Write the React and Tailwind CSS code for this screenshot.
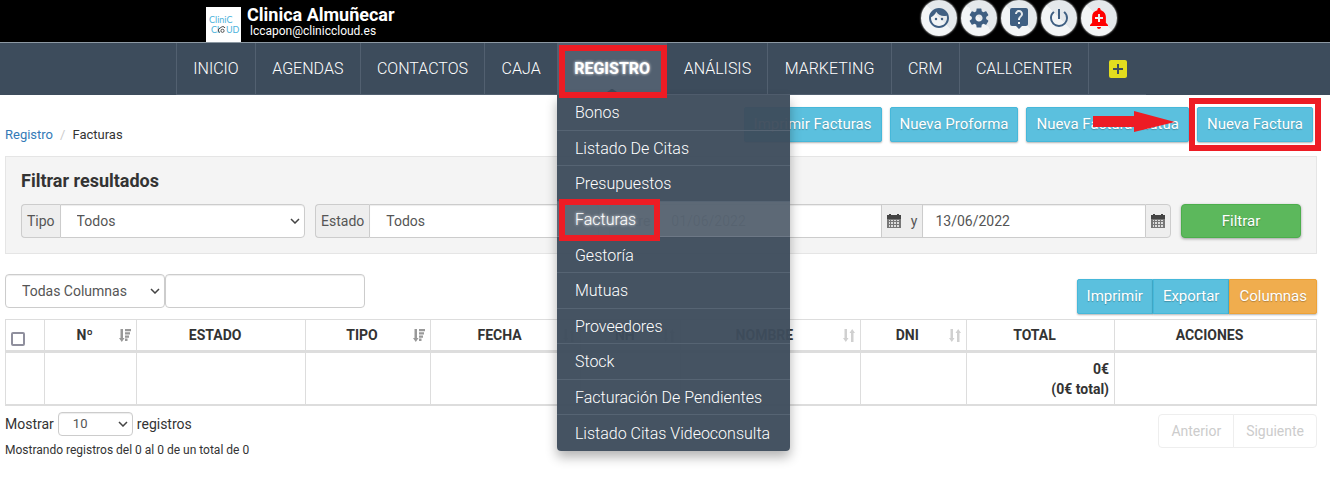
import React, { useState } from 'react';
import { MdFace, MdSettings, MdLiveHelp, MdPowerSettingsNew, MdAddAlert, MdAddBox } from 'react-icons/md';

const toolbar = [
  { label: 'Perfil', Icon: MdFace },
  { label: 'Ajustes', Icon: MdSettings },
  { label: 'Ayuda', Icon: MdLiveHelp },
  { label: 'Salir', Icon: MdPowerSettingsNew },
  { label: 'Avisos', Icon: MdAddAlert, alert: true }
];

const sections = ['INICIO', 'AGENDAS', 'CONTACTOS', 'CAJA', 'REGISTRO', 'ANÁLISIS', 'MARKETING', 'CRM', 'CALLCENTER'];

const registroMenu = [
  'Bonos',
  'Listado De Citas',
  'Presupuestos',
  'Facturas',
  'Gestoría',
  'Mutuas',
  'Proveedores',
  'Stock',
  'Facturación De Pendientes',
  'Listado Citas Videoconsulta'
];

const columns = [
  { name: 'Nº', width: 'w-[7%]', sort: 'desc' },
  { name: 'ESTADO', width: 'w-[12.9%]' },
  { name: 'TIPO', width: 'w-[9.5%]', sort: 'desc' },
  { name: 'FECHA', width: 'w-[11.5%]', sort: 'both' },
  { name: 'NH', width: 'w-[7.6%]', sort: 'both' },
  { name: 'NOMBRE', width: 'w-[13.7%]', sort: 'both' },
  { name: 'DNI', width: 'w-[8.1%]', sort: 'both' },
  { name: 'TOTAL', width: 'w-[11.3%]' },
  { name: 'ACCIONES', width: 'w-[15.4%]' }
];

const Logo = () => (
  <svg viewBox="0 0 35 35" className="h-[35px] w-[35px] bg-white" aria-hidden="true">
    <g fill="#4db3dc" fontFamily="Lato, sans-serif" fontSize="9">
      <text x="3" y="16">CliniC</text>
      <text x="5" y="26">Cl</text>
      <text x="20" y="26">UD</text>
    </g>
    <path d="M14 25.500a2.300 2.300 0 0 1 .5-4.500 2.500 2.500 0 0 1 4.500 0" fill="none" stroke="#444" strokeWidth="1" />
    <circle cx="16.500" cy="23.800" r="1.600" fill="none" stroke="#444" strokeWidth="0.900" />
  </svg>
);

const CalendarIcon = () => (
  <svg viewBox="0 0 14 14" className="h-[14px] w-[14px] shrink-0" aria-hidden="true">
    <path fill="#444" d="M0 1h2V0h2v1h6V0h2v1h2v4H0z" />
    <path fill="#777" d="M0 5h14v9H0z" />
    <path fill="#ddd" d="M2 6h1v1H2zM4 6h2v1H4zM7 6h2v1H7zM10 6h2v1h-2zM2 8h1v2H2zM4 8h2v2H4zM7 8h2v2H7zM10 8h2v2h-2zM2 11h1v2H2zM4 11h2v2H4zM7 11h2v2H7zM10 11h2v2h-2z" />
  </svg>
);

const SortIcon = ({ type }) => (
  <svg viewBox="0 0 12 13" className="h-[13px] w-3" fill={type === 'desc' ? '#999' : '#d0d0d0'} aria-hidden="true">
    <path d="M1.500 0h2.500v9h1.500l-2.700 4L0 9h1.500z" />
    {type === 'desc' ? (
      <path d="M6 0h6v2.300H6zM6 3.200h5v2.300H6zM6 6.400h4v2.300H6zM6 9.600h2.500v2.300H6z" />
    ) : (
      <path d="M8 13h2.500V4H12L9.200 0 6.500 4H8z" />
    )}
  </svg>
);

const Select = ({ id, label, options, className }) => (
  <div className="relative flex min-w-0 flex-1">
    <select
      id={id}
      aria-label={label}
      className={`w-full appearance-none border border-[#ccc] bg-white text-[#555] shadow-[inset_0_1px_1px_rgba(0,0,0,0.075)] outline-none ${className}`}
    >
      {options.map(option => (
        <option key={option}>{option}</option>
      ))}
    </select>
    <svg viewBox="0 0 10 6" className="pointer-events-none absolute right-[5px] top-1/2 h-[6px] w-[10px] -translate-y-1/2" fill="none" stroke="#444" strokeWidth="1.500">
      <path d="M1 1l4 4 4-4" />
    </svg>
  </div>
);

// Red frame drawn around the elements the guide points to
const Highlight = ({ className }) => (
  <span className={`pointer-events-none absolute z-30 border-6 border-[#ed1c24] ${className}`}></span>
);

const ActionButton = ({ children, className = '' }) => (
  <button
    type="button"
    className={`h-[35px] border px-[9px] text-[15px] text-white shadow-[0_1px_2px_rgba(0,0,0,0.3)] [text-shadow:0_1px_1px_rgba(0,0,0,0.25)] ${className}`}
  >
    {children}
  </button>
);

const blue = 'bg-[#5bc0de] border-[#46b8da]';
const addon = 'flex items-center border border-[#ccc] bg-[#eee] text-sm text-[#555]';
const dateField = 'min-w-0 flex-1 border-y border-[#ccc] bg-white px-3 text-sm text-[#555] shadow-[inset_0_1px_1px_rgba(0,0,0,0.075)] outline-none';

const Header = () => (
  <header className="flex h-[42px] bg-black pl-[206px] pr-[213px] text-white">
    <div className="flex items-end">
      <Logo />
      <div className="ml-[6px] pb-1">
        <div className="text-lg font-bold leading-[18px]">Clinica Almuñecar</div>
        <div className="ml-[3px] text-xs leading-[14px]">lccapon@cliniccloud.es</div>
      </div>
    </div>
    <div className="ml-auto flex gap-1">
      {toolbar.map(({ label, Icon, alert }) => (
        <button
          key={label}
          type="button"
          aria-label={label}
          className={`flex h-9 w-9 items-center justify-center rounded-full bg-linear-45 from-[#f3f5f6] from-50% to-[#e4e8eb] to-50% shadow-[0_0_2px_#fff] ${alert ? 'text-[#f00]' : 'text-[#3f5f82]'}`}
        >
          <Icon className="h-6 w-6" />
        </button>
      ))}
    </div>
  </header>
);

const RegistroMenu = () => (
  <ul className="absolute -left-px top-full z-20 mt-px grid h-[356px] w-[233px] auto-rows-fr overflow-hidden rounded-b bg-[#3d4c5c]/96 shadow-[0_6px_12px_rgba(0,0,0,0.3)]">
    {registroMenu.map(item => (
      <li
        key={item}
        className={`border-b last:border-b-0 ${item === 'Facturas' ? 'border-[#6d7886] bg-white/13' : 'border-[#566473]'}`}
      >
        <a href="#" className={`flex h-full items-center px-[18px] pt-[2px] text-base font-light text-white ${item === 'Facturas' ? '[text-shadow:0_0_3px_#fff]' : ''}`}>
          {item}
        </a>
      </li>
    ))}
  </ul>
);

const Nav = () => (
  <nav className="h-[53px] border-t border-[#8d99a3] bg-[#3d4c5c] pl-[176px]">
    <ul className="flex h-full w-[970px] border-b border-l border-[#526070]">
      {sections.map(section => {
        const open = section === 'REGISTRO';
        return (
          <li key={section} className={`relative grow border-r border-[#526070] ${open ? 'bg-[#526070]' : ''}`}>
            <a
              href="#"
              className={`flex h-full items-center justify-center px-4 text-base text-white ${open ? 'font-bold [text-shadow:0_0_3px_#fff]' : 'font-light'}`}
            >
              {section}
            </a>
            {open && (
              <>
                <svg viewBox="0 0 16 5" className="absolute bottom-0 left-1/2 h-[5px] w-4 -translate-x-1/2" fill="#3d4c5c" aria-hidden="true">
                  <path d="M0 5l6-4q2-2 4 0l6 4z" />
                </svg>
                <RegistroMenu />
                <Highlight className="left-px -right-px -bottom-1 top-[2px]" />
                <Highlight className="left-px top-[156px] h-[42px] w-[101px]" />
              </>
            )}
          </li>
        );
      })}
      <li className="flex grow items-center justify-center px-4">
        <button type="button" aria-label="Añadir" className="text-[#e2dc1e]">
          <MdAddBox className="h-6 w-6" />
        </button>
      </li>
    </ul>
  </nav>
);

const Filters = () => (
  <section className="border border-[#e5e5e5] bg-[#f4f4f4] px-[15px] pb-[15px] pt-[14px]">
    <h2 className="text-lg font-bold leading-5 text-[#333]">Filtrar resultados</h2>
    <form className="mt-[13px] grid h-[34px] grid-cols-[284fr_284fr_562fr_120fr] gap-[10px]">
      <div className="flex">
        <label htmlFor="tipo" className={`${addon} rounded-l border-r-0 px-[5px]`}>Tipo</label>
        <Select id="tipo" options={['Todos']} className="rounded-r pl-4 text-sm" />
      </div>
      <div className="flex">
        <label htmlFor="estado" className={`${addon} rounded-l border-r-0 px-[5px]`}>Estado</label>
        <Select id="estado" options={['Todos']} className="rounded-r pl-4 text-sm" />
      </div>
      <div className="flex">
        <label htmlFor="desde" className={`${addon} rounded-l px-2`}>Entre</label>
        <input id="desde" type="text" defaultValue="01/06/2022" className={dateField} />
        <label htmlFor="hasta" className={`${addon} gap-[10px] px-[5px]`}>
          <CalendarIcon />
          y
        </label>
        <input id="hasta" type="text" defaultValue="13/06/2022" className={dateField} />
        <span className={`${addon} rounded-r px-[5px]`}>
          <CalendarIcon />
        </span>
      </div>
      <button type="button" className="rounded border border-[#4cae4c] bg-[#5cb85c] text-[15px] text-white shadow-[0_1px_3px_rgba(0,0,0,0.35)] [text-shadow:0_1px_1px_rgba(0,0,0,0.3)]">
        Filtrar
      </button>
    </form>
  </section>
);

const InvoiceTable = ({ allChecked, onToggleAll }) => (
  <table className="w-full table-fixed border-collapse border border-[#ddd] text-sm text-[#333]">
    <thead>
      <tr className="h-8 border-b-3 border-[#ddd]">
        <th className="w-[3%] border-r border-[#ddd] pl-[5px] text-left">
          <input
            type="checkbox"
            aria-label="Seleccionar todos"
            checked={allChecked}
            onChange={onToggleAll}
            className="mt-2 block h-[14px] w-[14px] appearance-none rounded-xs border-2 border-[#8f8f9d] bg-white checked:bg-[#8f8f9d]"
          />
        </th>
        {columns.map(({ name, width, sort }) => (
          <th key={name} className={`border-r border-[#ddd] ${width}`}>
            <div className="flex items-center px-[5px]">
              <span className="flex-1 text-center">{name}</span>
              <span className="w-3">{sort && <SortIcon type={sort} />}</span>
            </div>
          </th>
        ))}
      </tr>
    </thead>
    <tbody>
      <tr className="border-b-2 border-[#ddd]">
        <td className="border-r border-[#ddd]"></td>
        {columns.map(({ name }) => (
          <td key={name} className="border-r border-[#ddd] px-[5px] pb-[5px] pt-[6px] text-right font-bold leading-5">
            {name === 'TOTAL' && (
              <>
                0€
                <br />
                (0€ total)
              </>
            )}
          </td>
        ))}
      </tr>
    </tbody>
  </table>
);

const App = () => {
  const [allChecked, setAllChecked] = useState(false);

  return (
    <div className="min-h-screen bg-white font-[Roboto,sans-serif] text-[#333]">
      <Header />
      <Nav />

      <main className="pl-[5px] pr-[13px]">
        <div className="flex items-start justify-between pr-1 pt-3">
          <div className="pt-[18px] text-[13px] leading-5">
            <a href="#" className="text-[#337ab7]">Registro</a>
            <span className="px-[7px] text-[#ccc]">/</span>
            <span>Facturas</span>
          </div>
          <div className="flex gap-2">
            <ActionButton className={`rounded-xs ${blue}`}>Imprimir Facturas</ActionButton>
            <ActionButton className={`rounded-xs ${blue}`}>Nueva Proforma</ActionButton>
            <ActionButton className={`rounded-xs ${blue}`}>Nueva Factura Mutua</ActionButton>
            <div className="relative">
              <ActionButton className={`rounded-xs ${blue}`}>Nueva Factura</ActionButton>
              <Highlight className="-inset-x-2 -inset-y-[9px]" />
              <svg viewBox="0 0 82 21" className="absolute right-full top-1 mr-[22px] h-[21px] w-[82px]" fill="#ed1c24" aria-hidden="true">
                <path d="M0 5h41V0l41 11-41 10v-5H0z" />
              </svg>
            </div>
          </div>
        </div>

        <div className="mt-[11px]">
          <Filters />
        </div>

        <div className="mt-5 flex items-start justify-between">
          <div className="flex h-[34px]">
            <div className="flex w-40">
              <Select id="columna" label="Columna" options={['Todas Columnas']} className="rounded pl-4 text-sm" />
            </div>
            <input type="text" aria-label="Buscar" className="w-[200px] rounded border border-[#ccc] px-3 text-sm shadow-[inset_0_1px_1px_rgba(0,0,0,0.075)] outline-none" />
          </div>
          <div className="flex pt-[5px]">
            <ActionButton className={`rounded-l-xs ${blue}`}>Imprimir</ActionButton>
            <ActionButton className={blue}>Exportar</ActionButton>
            <ActionButton className="rounded-r-xs border-[#eea236] bg-[#f0ad4e]">Columnas</ActionButton>
          </div>
        </div>

        <div className="mt-[5px]">
          <InvoiceTable allChecked={allChecked} onToggleAll={() => setAllChecked(!allChecked)} />
        </div>

        <div className="flex items-start justify-between pt-[6px]">
          <div>
            <div className="flex h-6 items-center gap-1 text-sm">
              <label htmlFor="registros">Mostrar</label>
              <div className="flex h-6 w-[75px]">
                <Select id="registros" options={['10', '25', '50']} className="rounded-sm pl-[14px] text-[13px]" />
              </div>
              <span>registros</span>
            </div>
            <p className="mt-1 text-xs leading-5">Mostrando registros del 0 al 0 de un total de 0</p>
          </div>
          <div className="mt-[2px] flex h-[34px] text-sm text-[#ccc]">
            <button type="button" disabled className="rounded-l border border-[#eee] px-3">Anterior</button>
            <button type="button" disabled className="-ml-px rounded-r border border-[#eee] px-3">Siguiente</button>
          </div>
        </div>
      </main>
    </div>
  );
};

export default App;
